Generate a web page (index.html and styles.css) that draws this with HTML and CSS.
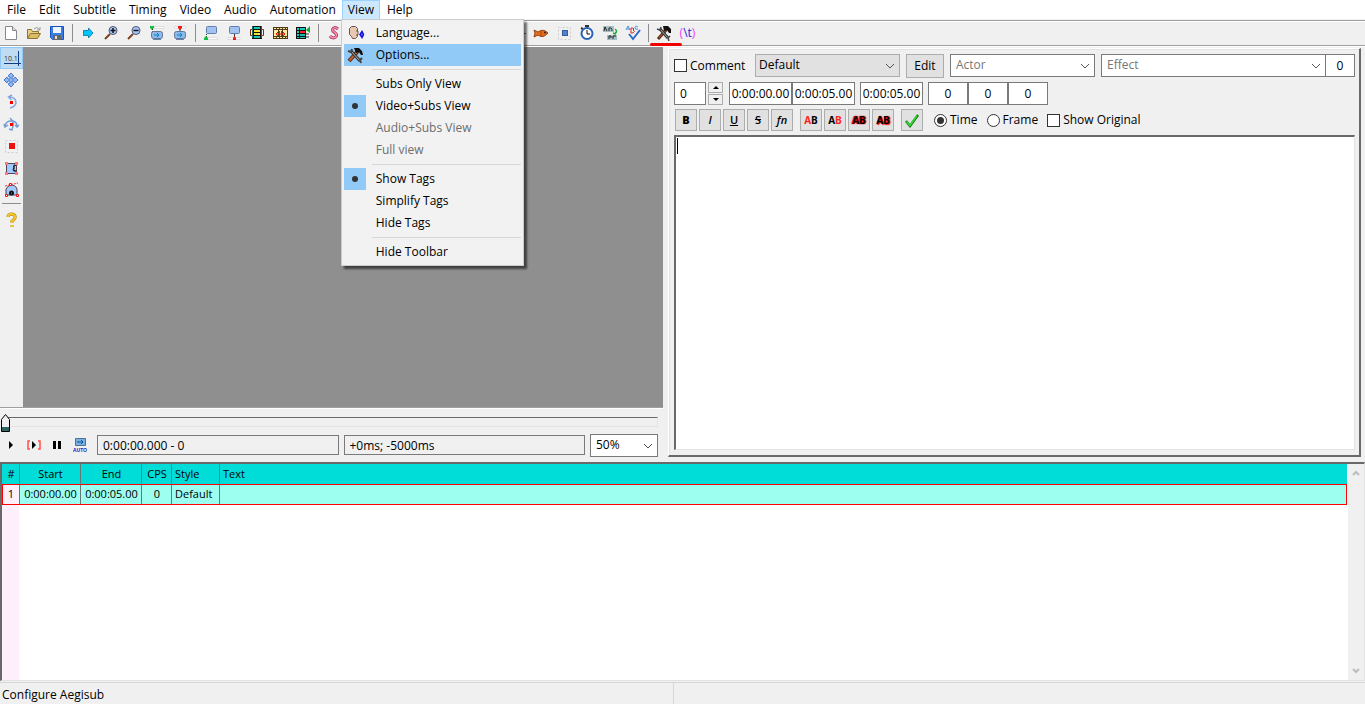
FILE: index.html
```html
<!DOCTYPE html>
<html lang="en">
<head>
<meta charset="utf-8">
<title>Aegisub</title>
<link rel="stylesheet" href="styles.css">
</head>
<body>
<nav class="menubar">
  <button>File</button>
  <button>Edit</button>
  <button>Subtitle</button>
  <button>Timing</button>
  <button>Video</button>
  <button>Audio</button>
  <button>Automation</button>
  <div class="menu-host">
    <button class="open">View</button>
    <div class="popup">
      <button><svg class="mark" viewBox="0 0 22 22"><path d="M5.500 6.500l2-2h4l2 2v8l-2 2h-3l-1-2-2-2z" fill="#e8c8b0" stroke="#6b5547"/><path d="M12 9h2v4h-2" fill="#e8c8b0" stroke="#6b5547"/><path d="M18 9.500l-2 3 2 3 1.500-3z" fill="#6b7cff" stroke="#1010e0" stroke-width="1.500"/></svg><span>Language...</span></button>
      <button class="hot"><svg class="mark" viewBox="0 0 22 22"><path d="M5 17L14 7" stroke="#5a2a10" stroke-width="4"/><path d="M5.500 16.500L13 8" stroke="#c0622c" stroke-width="2"/><path d="M7 7l9 10" stroke="#333" stroke-width="3"/><path d="M7 7l9 10" stroke="#b5b5ad"/><path d="M4 7l3 1 1-3M18 14l-2 2 1 3" fill="none" stroke="#444" stroke-width="2"/><path d="M10 4h5l3 3 1 4h-2l-2-3-3 1z" fill="#111"/></svg><span>Options...</span></button>
      <hr>
      <button><i class="mark"></i><span>Subs Only View</span></button>
      <button><i class="mark dot"></i><span>Video+Subs View</span></button>
      <button disabled><i class="mark"></i><span>Audio+Subs View</span></button>
      <button disabled><i class="mark"></i><span>Full view</span></button>
      <hr>
      <button><i class="mark dot"></i><span>Show Tags</span></button>
      <button><i class="mark"></i><span>Simplify Tags</span></button>
      <button><i class="mark"></i><span>Hide Tags</span></button>
      <hr>
      <button><i class="mark"></i><span>Hide Toolbar</span></button>
    </div>
  </div>
  <button>Help</button>
</nav>

<div class="toolbar">
  <button aria-label="New"><svg viewBox="0 0 16 16"><path d="M2.500 1.500h7l4 4v9h-11z" fill="#fff" stroke="#888"/><path d="M9.500 1.500v4h4" fill="#ddd" stroke="#888"/></svg></button>
  <button aria-label="Open"><svg viewBox="0 0 16 16"><path d="M1.500 13.500v-9h4l1 2h6v2" fill="#e8cf85" stroke="#8f7330"/><path d="M1.500 13.500l3-5h10l-3 5z" fill="#d9bd64" stroke="#8f7330"/><path d="M8 4q3-3 5 0l1 1m0-3v3h-3" fill="none" stroke="#999"/></svg></button>
  <button aria-label="Save"><svg viewBox="0 0 16 16"><path d="M1.500 1.500h13v13h-11l-2-2z" fill="#397de8" stroke="#1753bb"/><path d="M4 2h8v6H4z" fill="#eef4ff"/><path d="M4 10h8v5H4z" fill="#666"/><path d="M6 11h2v3H6z" fill="#ddd"/></svg></button>
  <hr>
  <button aria-label="Jump"><svg viewBox="0 0 16 16"><path d="M3.500 5.500h5v-2.500l4.500 5-4.500 5v-2.500h-5z" fill="#00c8ff" stroke="#1584b5"/></svg></button>
  <button aria-label="Zoom in"><svg viewBox="0 0 16 16"><path d="M2 14l5-5" stroke="#7c3f20" stroke-width="2"/><circle cx="10" cy="5.500" r="4" fill="#a5c8ff" stroke="#556"/><path d="M7.500 5.500h5M10 3v5" stroke="#111" stroke-width="1.500"/></svg></button>
  <button aria-label="Zoom out"><svg viewBox="0 0 16 16"><path d="M2 14l5-5" stroke="#7c3f20" stroke-width="2"/><circle cx="10" cy="5.500" r="4" fill="#a5c8ff" stroke="#556"/><path d="M7.500 5.500h5" stroke="#111" stroke-width="1.500"/></svg></button>
  <button aria-label="Video to start"><svg viewBox="0 0 16 16"><path d="M5 1.500h10v2H5z" fill="#fff" stroke="#ddd"/><path d="M1 1h4v2l-2 2-2-2z" fill="#12c040"/><path d="M3.500 4v3h3" fill="none" stroke="#333" stroke-dasharray="1"/><rect x="2.500" y="6.500" width="11" height="7" rx="2" fill="#8db9e8" stroke="#5f7698"/><path d="M4 14.500h8" stroke="#6482ad"/><path d="M5 10h5m-2-2l2 2-2 2" fill="none" stroke="#0780c5"/></svg></button>
  <button aria-label="Video to end"><svg viewBox="0 0 16 16"><path d="M2 1.500h12v2H2z" fill="#fff" stroke="#ddd"/><path d="M6 1h4v2l-2 2-2-2z" fill="#f01818"/><path d="M8 4v3" stroke="#333"/><rect x="2.500" y="6.500" width="11" height="7" rx="2" fill="#8db9e8" stroke="#5f7698"/><path d="M4 14.500h8" stroke="#6482ad"/><path d="M5 10h5m-2-2l2 2-2 2" fill="none" stroke="#0780c5"/></svg></button>
  <hr>
  <button aria-label="Start to video"><svg viewBox="0 0 16 16"><rect x="3.500" y="1.500" width="10" height="7" rx="1" fill="#a3c2ee" stroke="#617fae"/><path d="M3.500 9v3" stroke="#333" stroke-dasharray="1"/><path d="M5 12.500h10v2H5z" fill="#fff" stroke="#ddd"/><path d="M1 15v-2l2-2 2 2v2z" fill="#12c040"/></svg></button>
  <button aria-label="End to video"><svg viewBox="0 0 16 16"><rect x="3.500" y="1.500" width="10" height="7" rx="1" fill="#a3c2ee" stroke="#617fae"/><path d="M8.500 9v3" stroke="#333"/><path d="M2 12.500h12v2H2z" fill="#fff" stroke="#ddd"/><path d="M7 15v-2l1.500-2 1.500 2v2z" fill="#f01818"/></svg></button>
  <button aria-label="Select visible"><svg viewBox="0 0 16 16"><path d="M3 1h10v13H3z" fill="#111"/><path d="M5 2h6v2H5zM5 11h6v2H5z" fill="#18c8b0"/><path d="M5 5h6v2H5zM5 8h6v2H5z" fill="#f1e235"/><path d="M3 4.500H1.500v6H3M13 4.500h1.500v6H13" fill="none" stroke="#7b2d16"/><path d="M3 2h1M3 4h1M3 6h1M3 8h1M3 10h1M3 12h1M12 2h1M12 4h1M12 6h1M12 8h1M12 10h1M12 12h1" stroke="#18c8b0"/></svg></button>
  <button aria-label="Snap to scene"><svg viewBox="0 0 16 16"><path d="M1 2h15v12H1z" fill="#4d3a16"/><path d="M2 5h4v6H2zM7 5h3v6H7zM11 5h4v6h-4z" fill="#ffe9a0"/><path d="M2 3.500h13M2 12.500h13" stroke="#ffe69a" stroke-dasharray="2 1"/><path d="M4 9h9m-7-2L4 9l2 2m5-4l2 2-2 2M7.500 6v5M9.500 6v5" stroke="#d51c12" fill="none"/></svg></button>
  <button aria-label="Shift to frame"><svg viewBox="0 0 16 16"><path d="M1 2h10v12H1z" fill="#111"/><path d="M2 3h2v2H2zM5 3h5v2H5zM2 6h2v2H2zM2 9h2v2H2zM2 12h2v1H2zM5 12h5v1H5z" fill="#1cc8be"/><path d="M5 6h5v2H5z" fill="#f22"/><path d="M5 9h5v2H5z" fill="#16b9ac"/><path d="M15 1v7l-4-3z" fill="#12ad30"/><path d="M11 9h3m-3 3h3" stroke="#333"/></svg></button>
  <hr>
  <button aria-label="Styles manager"><svg viewBox="0 0 16 16"><path d="M12 4Q8 1 6.500 4.500c-.5 3 5 3 4 6.500-2 3-5 2-6.500 0" fill="none" stroke="#9c3155" stroke-width="3"/><path d="M12 4Q8 1 6.500 4.500c-.5 3 5 3 4 6.500-2 3-5 2-6.500 0" fill="none" stroke="#ff8daf" stroke-width="1.500"/></svg></button>
  <span class="covered"></span>
  <button aria-label="Attachments"><svg viewBox="0 0 16 16"><path d="M3 3h9v10H3z" fill="#aaa"/><path d="M3 8.500h13" stroke="#4484d0"/></svg></button>
  <button aria-label="Resample"><svg viewBox="0 0 16 16"><path d="M1 5l4 2q5-4 10 1-5 6-10 2l-4 2 1-4z" fill="#e36d1d" stroke="#934511"/><circle cx="12" cy="7.500" r="1" fill="#222"/><path d="M8 6v5" stroke="#a94711"/></svg></button>
  <button aria-label="Timing processor"><svg viewBox="0 0 16 16"><rect x="2.500" y="2.500" width="12" height="12" fill="none" stroke="#ccc" stroke-dasharray="2"/><rect x="6.500" y="5.500" width="5" height="5" fill="#5280cc" stroke="#355da3"/></svg></button>
  <button aria-label="Shift times"><svg viewBox="0 0 16 16"><path d="M6 1h4M8 1v2M2 3l2 1" stroke="#333" stroke-width="2"/><circle cx="8" cy="8.500" r="5.500" fill="#fff" stroke="#2b63b5" stroke-width="2"/><path d="M8 5v4h3" fill="none" stroke="#111"/></svg></button>
  <button aria-label="Kanji timer"><svg viewBox="0 0 16 16"><path d="M1 1h11v6H1zM5 10h10v5H5z" fill="#a5c0c5"/><path d="M2 6l1-4 2 4M7 6V3q3-1 3 3M7 14v-3h2v2M11 14v-3h3" fill="none" stroke="#222"/><path d="M13 4q3 2 0 5m-2-1l2 1 1-2" fill="none" stroke="#18ae32" stroke-width="1.500"/></svg></button>
  <button aria-label="Spell checker"><svg viewBox="0 0 16 16"><path d="M1 5l2-4 2 4M2 4h3M13 2q-3-2-3 1 0 2 3 1" fill="none" stroke="#3f94e0"/><path d="M6 3h2q2 1 0 2 3 1 0 3H6z" fill="none" stroke="#e02525"/><path d="M4 9l4 5 7-9" fill="none" stroke="#2d6bc8" stroke-width="2"/></svg></button>
  <hr>
  <button class="marked" aria-label="Options"><svg viewBox="0 0 16 16"><path d="M2 14L11 4" stroke="#5a2a10" stroke-width="3"/><path d="M3 13l7-8" stroke="#b9602e"/><path d="M4 4l8 9" stroke="#333" stroke-width="3"/><path d="M4 4l8 9" stroke="#aaa"/><path d="M1 4l3 1 1-3M14 11l-2 2 1 3" fill="none" stroke="#444" stroke-width="1.500"/><path d="M7 1h5l3 3v4h-2l-2-3-3 1z" fill="#111"/></svg></button>
  <button class="cycle" aria-label="Cycle tag hiding"><span>(</span><b>\t</b><span>)</span></button>
</div>

<main class="work">
  <section class="video">
    <div class="stage">
      <div class="tools">
        <button class="on" aria-label="Standard"><svg viewBox="0 0 20 20"><text x="2" y="13" font-size="7">10.1</text><path d="M16.500 3v15M2 15.500h17" stroke="#123f85"/></svg></button>
        <button aria-label="Drag"><svg viewBox="0 0 20 20"><path d="M10 3l3 3-2 1v2h2l1-2 3 3-3 3-1-2h-2v2l2 1-3 3-3-3 2-1v-2H7l-1 2-3-3 3-3 1 2h2V7L7 6z" fill="#8fb8f5" stroke="#4a79c4"/></svg></button>
        <button aria-label="Rotate Z"><svg viewBox="0 0 20 20"><path d="M8 5q7 0 7 6-1 4-6 5M11 3L7.500 5l3 3" fill="none" stroke="#82a7df" stroke-width="1.500"/><path d="M9 9h3v3H9z" fill="#f00"/></svg></button>
        <button aria-label="Rotate XY"><svg viewBox="0 0 20 20"><path d="M4 12q1-5 6-5 6 0 6 5M9 4q5 4 2 12l-3-1M3 10l1 3 3-2M14 11l2 2 2-2" fill="none" stroke="#759dd8" stroke-width="1.500"/><path d="M9 9h3v3H9z" fill="#f00"/></svg></button>
        <button aria-label="Scale"><svg viewBox="0 0 20 20"><rect x="4.500" y="4.500" width="12" height="12" fill="none" stroke="#ccc" stroke-dasharray="2"/><path d="M8 7h6v6H8z" fill="#f01010"/></svg></button>
        <button aria-label="Clip"><svg viewBox="0 0 20 20"><path d="M5.500 5.500h10v10h-10z" fill="#a1caff" stroke="#534354"/><path d="M15 7q-3 0-2 3-2 3 2 3" fill="none" stroke="#222" stroke-width="1.500"/><path d="M4 4h3v3H4zM14 4h3v3h-3zM4 14h3v3H4zM14 14h3v3h-3z" fill="#ff7777"/></svg></button>
        <button aria-label="Vector clip"><svg viewBox="0 0 20 20"><path d="M5 15V9q2-4 6-4 5 1 5 5v5z" fill="#a1caff" stroke="#534354"/><path d="M4 6l13-3" stroke="#e33" stroke-dasharray="2 1"/><path d="M4.500 14.500h2v2h-2zM15.500 14.500h2v2h-2zM8.500 3.500h2v2h-2z" fill="#fff" stroke="#f01010"/><circle cx="10.500" cy="13" r="1.500" fill="none" stroke="#111" stroke-width="2"/></svg></button>
        <hr>
        <button aria-label="Help"><svg viewBox="0 0 20 20"><path d="M7 7q0-3 4-3 4 1 3 4-1 2-3 3v2M11 15v2" fill="none" stroke="#b38510" stroke-width="3"/><path d="M7 7q0-3 4-3 4 1 3 4-1 2-3 3v2M11 15v2" fill="none" stroke="#f7c62a" stroke-width="2"/></svg></button>
      </div>
      <div class="screen"></div>
    </div>
    <div class="seek"><div class="track"></div><svg class="knob" viewBox="0 0 9 19"><path d="M.5 5.500l4-5 4 5v12H.5z" fill="#f0f0f0" stroke="#000"/><path d="M1 13h7v4H1z" fill="#2c6660"/></svg></div>
    <div class="playback">
      <button aria-label="Play"><svg viewBox="0 0 16 16"><path d="M6 4l4 4-4 4z"/></svg></button>
      <button aria-label="Play line"><svg viewBox="0 0 16 16"><path d="M4 4H2v8h2M12 4h2v8h-2" fill="none" stroke="#ff4d4d" stroke-width="1.500"/><path d="M6 4l4 4-4 4z"/></svg></button>
      <button aria-label="Pause"><svg viewBox="0 0 16 16"><path d="M4 4h3v8H4zM9 4h3v8H9z"/></svg></button>
      <button aria-label="Auto scroll"><svg viewBox="0 0 16 16"><path d="M3.500 1.500h10v7h-10z" fill="#79afe2" stroke="#536f95"/><path d="M5 5h6m-2-2l2 2-2 2" fill="none" stroke="#0754a5"/><text class="auto" x="1" y="15" font-size="5">AUTO</text></svg></button>
      <input class="readout" aria-label="Position" value="0:00:00.000 - 0" readonly>
      <input class="readout" aria-label="Offset" value="+0ms; -5000ms" readonly>
      <span class="combo zoom"><select aria-label="Zoom"><option>50%</option></select><svg viewBox="0 0 10 6"><path d="M1 1l4 4 4-4"/></svg></span>
    </div>
  </section>

  <section class="editor">
    <div class="row head">
      <label class="comment"><input type="checkbox">Comment</label>
      <span class="combo gray"><select aria-label="Style"><option>Default</option></select><svg viewBox="0 0 10 6"><path d="M1 1l4 4 4-4"/></svg></span>
      <button class="push">Edit</button>
      <span class="combo faint"><select aria-label="Actor"><option>Actor</option></select><svg viewBox="0 0 10 6"><path d="M1 1l4 4 4-4"/></svg></span>
      <span class="pair">
        <span class="combo faint effect"><select aria-label="Effect"><option>Effect</option></select><svg viewBox="0 0 10 6"><path d="M1 1l4 4 4-4"/></svg></span>
        <input class="field chars" aria-label="Characters" value="0">
      </span>
    </div>
    <div class="row">
      <span class="layer"><input class="field num" aria-label="Layer" value="0">
        <span class="spin"><button aria-label="Up"><svg viewBox="0 0 6 3"><path d="M0 3l3-3 3 3z"/></svg></button><button aria-label="Down"><svg viewBox="0 0 6 3"><path d="M0 0l3 3 3-3z"/></svg></button></span></span>
      <span class="joined"><input class="field time" aria-label="Start" value="0:00:00.00"><input class="field time" aria-label="End" value="0:00:05.00"></span>
      <input class="field time" aria-label="Duration" value="0:00:05.00">
      <span class="joined"><input class="field margin" aria-label="Left margin" value="0"><input class="field margin" aria-label="Right margin" value="0"><input class="field margin" aria-label="Vertical margin" value="0"></span>
    </div>
    <div class="row format">
      <span class="group"><button class="b">B</button><button class="i">I</button><button class="u">U</button><button class="s">S</button><button class="i">fn</button></span>
      <span class="group"><button class="ab"><em>A</em>B</button><button class="ab">A<em>B</em></button><button class="ab glow">AB</button><button class="ab shade">AB</button></span>
      <span class="group"><button aria-label="Commit"><svg viewBox="0 0 16 16"><path d="M2 9l4 5 8-11" fill="none" stroke="#176b17" stroke-width="2.500"/><path d="M2.500 9.500l3.500 4 7-10" fill="none" stroke="#2fe02f" stroke-width="1.500"/></svg></button></span>
      <span class="checks"><label><input type="radio" name="unit" checked>Time</label><label><input type="radio" name="unit">Frame</label><label><input type="checkbox">Show Original</label></span>
    </div>
    <div class="text"><textarea aria-label="Subtitle text"></textarea></div>
  </section>
</main>

<section class="grid">
  <div class="lines">
    <table>
      <colgroup><col class="c-num"><col class="c-time"><col class="c-time"><col class="c-cps"><col class="c-style"><col></colgroup>
      <thead><tr><th>#</th><th>Start</th><th>End</th><th>CPS</th><th class="left">Style</th><th class="left">Text</th></tr></thead>
      <tbody><tr><td class="index">1</td><td>0:00:00.00</td><td>0:00:05.00</td><td>0</td><td class="left">Default</td><td></td></tr></tbody>
    </table>
  </div>
  <div class="scroll"><svg viewBox="0 0 8 6"><path d="M1 5l3-3 3 3"/></svg><svg viewBox="0 0 8 6"><path d="M1 1l3 3 3-3"/></svg></div>
</section>

<footer class="status"><span>Configure Aegisub</span><span></span></footer>
</body>
</html>
```
FILE: styles.css
```css
* { box-sizing: border-box; }
body {
  margin: 0;
  height: 100vh;
  display: flex;
  flex-direction: column;
  overflow: hidden;
  background: #f0f0f0;
  color: #000;
  font: 12px/16px "Open Sans", "Noto Sans", sans-serif;
}
button, input, select, textarea { font: inherit; color: inherit; margin: 0; padding: 0; border: 0; border-radius: 0; outline: 0; background: none; }
button { display: flex; align-items: center; justify-content: center; }
svg { display: block; flex: none; }
hr { margin: 0; border: 0; flex: none; }

.menubar { display: flex; flex: none; height: 20px; background: #fff; border-bottom: 1px solid #f0f0f0; }
.menubar > button { padding: 0 6px 0 7px; }
.menu-host { position: relative; display: flex; }
.open { padding: 0 5px; background: #cce8ff; border: 1px solid #99d1ff; border-bottom: 0; }
.popup {
  position: absolute; top: 19px; left: -1px; z-index: 5;
  width: 183px; padding: 2px;
  background: #f2f2f2; border: 1px solid #ccc;
  box-shadow: 3px 3px 2px rgba(0, 0, 0, .55);
}
.popup button { width: 100%; height: 22px; justify-content: flex-start; gap: 10px; }
.popup button:disabled { color: #6d6d6d; }
.popup .hot { background: #91c9f7; }
.popup .hot, .popup hr { margin-right: 0; }
.mark { width: 22px; height: 22px; display: grid; place-items: center; }
.dot { background: #91c9f7; }
.dot::before { content: ""; width: 6px; height: 6px; border-radius: 50%; background: #333; }
.popup hr { height: 1px; margin: 3px 0 3px 28px; background: #d7d7d7; }

.toolbar { display: flex; flex: none; align-items: center; height: 27px; padding-bottom: 2px; border-top: 1px solid #a0a0a0; border-bottom: 1px solid #fff; box-shadow: inset 0 1px #fff, inset 0 -1px #a0a0a0; }
.toolbar button { width: 23px; height: 22px; padding-right: 1px; }
.toolbar svg { width: 16px; height: 16px; }
.toolbar hr { width: 1px; height: 18px; margin: 0 4px 0 3px; background: #8d8d8d; }
.covered { width: 161px; }
.marked { position: relative; }
.marked::after { content: ""; position: absolute; left: -3px; top: 21px; width: 32px; height: 3px; border-radius: 2px; background: #f00000; }
.toolbar .cycle { padding: 0; color: #f03cf0; }
.cycle b { color: #2a1be0; font-weight: 400; }

.work { display: flex; flex: 0 0 415px; gap: 5px; padding: 0 4px 0 0; }
.video { flex: 0 1 663px; min-width: 0; display: flex; flex-direction: column; }
.stage { display: flex; flex: 1; border-bottom: 1px solid #a0a0a0; box-shadow: 0 1px #fff; }
.tools { width: 23px; }
.tools button { width: 23px; height: 22px; padding-right: 2px; }
.tools svg { width: 20px; height: 20px; font-family: "Open Sans", sans-serif; fill: #333; }
.tools .on { padding: 0; background: #c0dcf3; border: 1px solid #90c8f6; }
.tools hr { height: 1px; margin: 2px 2px 5px; background: #8d8d8d; }
.screen { flex: 1; background: #8f8f8f; }
.seek { position: relative; height: 26px; padding: 9px 5px 0; }
.track { height: 10px; border: 1px solid #e3e3e3; border-top-color: #696969; border-left: 0; }
.knob { position: absolute; left: 1px; top: 6px; width: 9px; height: 19px; }
.playback { display: flex; align-items: center; padding: 0 5px 6px 0; height: 28px; }
.playback > button { width: 23px; height: 22px; padding-right: 1px; }
.playback button svg { width: 16px; height: 16px; }
.auto { fill: #2424c8; font-weight: 700; }
.readout { flex: 1; min-width: 0; height: 20px; margin-left: 5px; padding: 0 5px; border: 1px solid #7a7a7a; }

.combo { position: relative; display: flex; height: 23px; flex: 0 0 145px; background: #fff; border: 1px solid #7a7a7a; }
.combo select { appearance: none; width: 100%; padding: 0 5px 1px; }
.combo svg { position: absolute; right: 4px; top: 8px; width: 10px; height: 6px; fill: none; stroke: #555; pointer-events: none; }
.zoom { flex-basis: 68px; margin-left: 5px; }
.gray { background: #e1e1e1; border-color: #adadad; }
.gray select { padding-left: 3px; }
.faint select { color: #777; }

.editor { flex: 1; min-width: 0; display: flex; flex-direction: column; gap: 4px; margin: 1px 0 5px; padding: 5px 4px 5px 5px; border: 1px solid #fff; border-right: 2px solid #696969; border-bottom: 2px solid #696969; box-shadow: inset 1px 1px #e3e3e3; }
.row { display: flex; align-items: center; gap: 5px; height: 23px; }
.head { gap: 6px; margin-bottom: 1px; }
.comment { flex: 0 0 75px; }
label { display: flex; align-items: center; gap: 3px; white-space: nowrap; }
input[type="checkbox"], input[type="radio"] { appearance: none; width: 13px; height: 13px; background: #fff; border: 1px solid #333; flex: none; }
input[type="radio"] { border-radius: 50%; display: grid; place-items: center; }
input[type="radio"]:checked::before { content: ""; width: 7px; height: 7px; border-radius: 50%; background: #333; }
.push { width: 38px; height: 24px; background: #e1e1e1; border: 1px solid #adadad; }
.pair { display: flex; flex: 1; }
.pair .effect { flex: 1; }
.field { height: 23px; background: #fff; border: 1px solid #7a7a7a; text-align: center; padding-bottom: 1px; }
.chars { width: 30px; margin-left: -1px; }
.layer { display: flex; gap: 2px; margin-right: 1px; }
.num { width: 32px; text-align: left; padding-left: 5px; }
.spin { display: flex; flex-direction: column; gap: 1px; }
.spin button { width: 15px; height: 11px; border: 1px solid #adadad; }
.spin svg { width: 6px; height: 3px; }
.joined { display: flex; }
.time { width: 63px; }
.margin { width: 40px; }
.format { gap: 7px; height: 22px; padding-left: 1px; }
.group { display: flex; gap: 2px; }
.group button { width: 22px; height: 22px; background: #e1e1e1; border: 1px solid #adadad; font-size: 11px; }
.group svg { width: 16px; height: 16px; }
.group .b { font-weight: 800; }
.group .i { font-style: italic; font-weight: 600; }
.group .u { text-decoration: underline; font-weight: 600; }
.group .s { text-decoration: line-through; font-weight: 600; }
.group .ab { font-size: 10px; font-weight: 700; }
.ab em { color: #f22; font-style: normal; }
.glow { text-shadow: 0 0 1px #f00, 1px 0 1px #f00, -1px 0 1px #f00; }
.shade { text-shadow: 1px 1px 1px #f00, 1px 0 1px #f00; }
.checks { display: flex; gap: 9px; margin-left: 4px; }
.text { position: relative; flex: 1; display: flex; }
.text::before { content: ""; position: absolute; left: 3px; top: 3px; width: 1px; height: 16px; background: #000; }
textarea { flex: 1; width: 100%; padding: 2px; resize: none; background: #fff; border: 1px solid #e3e3e3; border-top: 2px solid #696969; border-left: 2px solid #696969; line-height: 18px; }

.grid { display: flex; flex: 1; min-height: 0; border: 2px solid #696969; border-right: 1px solid #e3e3e3; border-bottom: 1px solid #e3e3e3; background: #fff; }
.lines { flex: 1; padding-right: 1px; background: linear-gradient(90deg, #ffeffa 17px, #fff 17px); }
table { width: 100%; table-layout: fixed; border-collapse: separate; border-spacing: 0; font-size: 11px; }
.c-num { width: 18px; }
.c-time { width: 61px; }
.c-cps { width: 30px; }
.c-style { width: 48px; }
th, td { height: 20px; padding: 0 0 0 1px; font-weight: 400; line-height: 16px; text-align: center; white-space: nowrap; border-right: 1px solid #6b7777; }
th:last-child, td:last-child { border-right: 0; }
th { background: #00dcd8; }
td { height: 21px; padding-bottom: 2px; background: #9cfff0; }
.index { background: #ffeffa; }
tbody tr { outline: 1px solid #f00; outline-offset: -1px; }
.left { text-align: left; padding-left: 3px; }
.scroll { width: 16px; display: flex; flex-direction: column; align-items: center; justify-content: space-between; padding: 6px 0; background: #f0f0f0; }
.scroll svg { width: 8px; height: 6px; fill: none; stroke: #bcbcbc; stroke-width: 2; }

.status { display: grid; grid-template-columns: 673px 1fr; flex: none; height: 22px; margin-top: 1px; border-top: 1px solid #d7d7d7; }
.status span { padding: 4px 2px 0; }
.status span + span { border-left: 1px solid #d7d7d7; }
```
